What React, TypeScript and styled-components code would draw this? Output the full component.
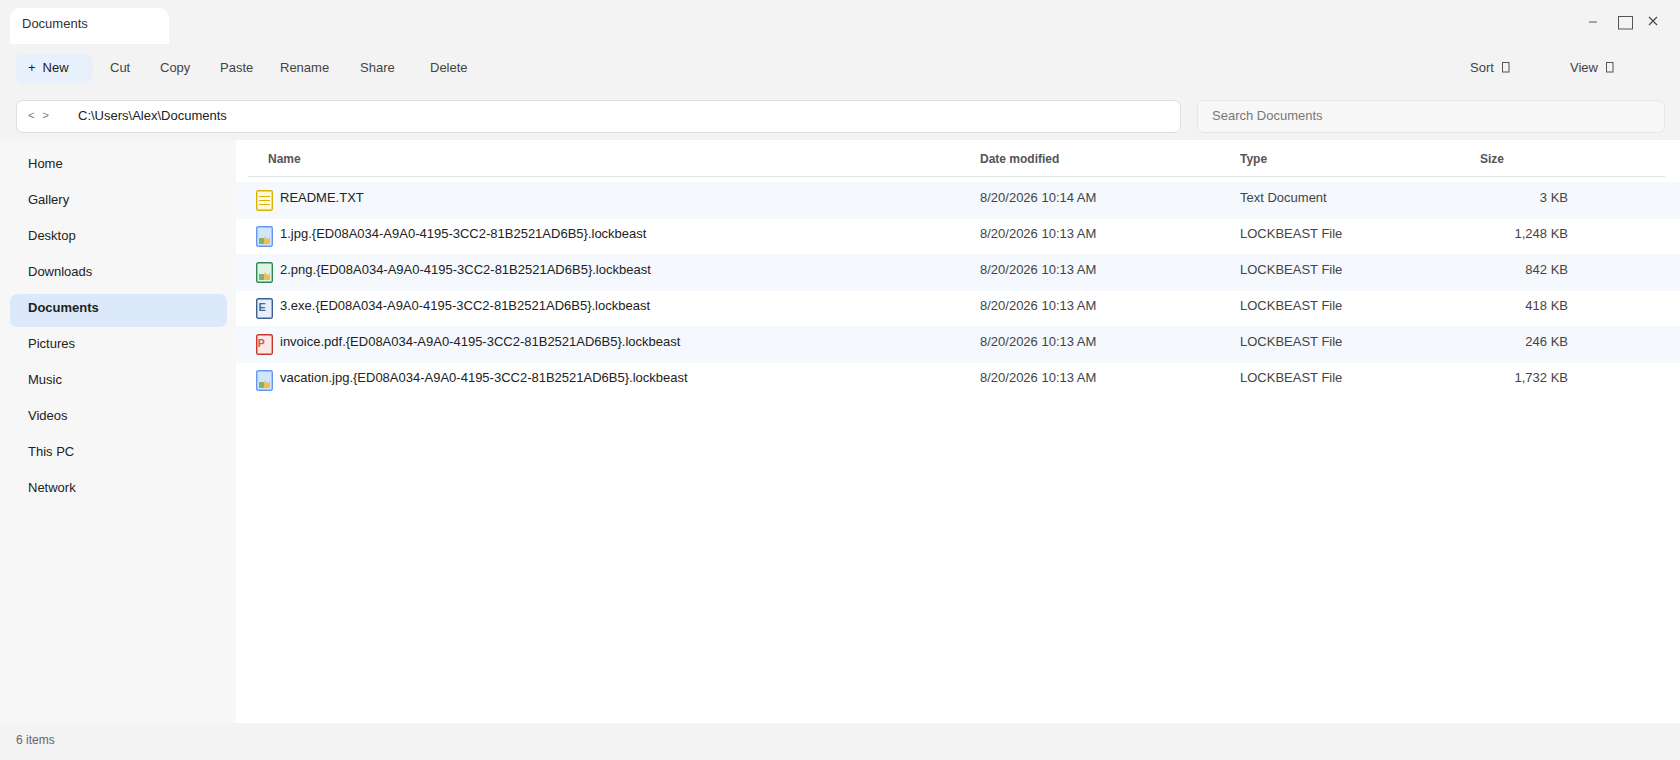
import React from "react";
import styled, { createGlobalStyle } from "styled-components";

const Global = createGlobalStyle`
  html, body { margin: 0; padding: 0; height: 100%; overflow: hidden; }
  body { font-family: "Liberation Sans", Arial, sans-serif; background: #f3f3f3; color: #222; }
`;

const Shell = styled.div`
  width: 1680px; height: 760px; display: flex; flex-direction: column; overflow: hidden; background: #f3f3f3;
`;
const TitleBar = styled.div`
  height: 54px; flex: none; display: flex; justify-content: space-between; align-items: flex-start; padding: 8px 0 0 10px; box-sizing: border-box;
`;
const Tab = styled.div`
  width: 159px; height: 36px; background: #fff; border-radius: 10px 10px 0 0; padding: 8px 12px 0; box-sizing: border-box; font-size: 13px; line-height: 15px; color: #333;
`;
const WindowControls = styled.div`
  display: flex; align-items: flex-start; margin-top: 8px; margin-right: 22px;
`;
const ControlIcon = styled.svg<{ $gap: number }>`
  display: block; flex: none; margin-left: ${(p) => p.$gap}px;
`;
const Toolbar = styled.div`
  height: 29px; flex: none; display: flex; align-items: stretch; padding: 0 10px 0 16px;
`;
const NewButton = styled.div`
  width: 77px; margin-right: 5px; background: #e8f0fb; border-radius: 8px; box-sizing: border-box; padding: 6px 0 0 12px; font-size: 13px; line-height: 15px; color: #222; display: flex; gap: 7px;
`;
const ToolButton = styled.div<{ $w: number }>`
  width: ${(p) => p.$w}px; padding: 6px 0 0 12px; box-sizing: border-box; font-size: 13px; line-height: 15px; color: #444;
`;
const MenuButton = styled.div<{ $w: number; $push?: boolean }>`
  width: ${(p) => p.$w}px; padding-top: 6px; box-sizing: border-box; font-size: 13px; line-height: 15px; color: #444; display: flex; gap: 8px;
  margin-left: ${(p) => (p.$push ? "auto" : "0")};
`;
const MissingGlyph = styled.svg`
  display: block; flex: none; margin-top: 2px;
`;
const AddressRow = styled.div`
  height: 33px; flex: none; margin-top: 17px; padding: 0 15px 0 16px; display: grid; grid-template-columns: 1165px 468px; gap: 16px;
`;
const AddressBar = styled.div`
  background: #fff; border: 1px solid #dedede; border-radius: 7px; box-sizing: border-box; display: flex; padding: 7px 0 0 11px; font-size: 13px; line-height: 15px; color: #222;
`;
const NavArrows = styled.div`
  width: 50px; flex: none; display: flex; gap: 8px; padding-top: 2px; font-size: 11px; line-height: 11px; color: #777;
`;
const SearchField = styled.div`
  background: #f7f7f7; border: 1px solid #e6e6e6; border-radius: 7px; box-sizing: border-box; padding: 7px 15px 0 14px; font-size: 13px; line-height: 15px; color: #777;
`;
const Body = styled.div`
  flex: 1; min-height: 0; margin-top: 7px; display: flex; background: #fff;
`;
const Sidebar = styled.nav`
  width: 236px; flex: none; background: #f7f7f7; padding: 10px 9px 0 10px; box-sizing: border-box; display: flex; flex-direction: column; gap: 3px;
`;
const NavItem = styled.div<{ $active?: boolean }>`
  height: 33px; box-sizing: border-box; padding: 6px 18px 0; font-size: 13px; line-height: 15px; border-radius: 7px;
  color: #222; font-weight: ${(p) => (p.$active ? 700 : 400)};
  background: ${(p) => (p.$active ? "#dce9fb" : "transparent")};
`;
const FilePane = styled.main`
  flex: 1; min-width: 0; display: flex; flex-direction: column;
`;
const HeaderRow = styled.div`
  height: 37px; flex: none; margin: 0 15px 5px 12px; padding: 12px 0 0 20px; box-sizing: border-box; border-bottom: 1px solid #e3e3e3;
  display: grid; grid-template-columns: 712px 260px 240px 88px; font-size: 12px; line-height: 14px; font-weight: 700; color: #555;
`;
const FileRow = styled.div<{ $alt: boolean }>`
  height: ${(p) => (p.$alt ? 37 : 35)}px; flex: none; box-sizing: border-box; padding: ${(p) => (p.$alt ? 8 : 7)}px 0 0 20px;
  display: grid; grid-template-columns: 724px 260px 240px 88px; font-size: 13px; line-height: 15px; color: #444;
  background: ${(p) => (p.$alt ? "#f5f8fd" : "#fff")};
`;
const NameCell = styled.div`
  display: flex; gap: 7px; color: #222; min-width: 0;
`;
const FileIconSvg = styled.svg`
  display: block; flex: none;
`;
const SizeCell = styled.div`
  text-align: right;
`;
const StatusBar = styled.footer`
  height: 37px; flex: none; padding: 10px 16px 0; box-sizing: border-box; font-size: 12px; line-height: 14px; color: #666;
`;

type Kind = "txt" | "img" | "png" | "exe" | "pdf";

const palette: Record<Kind, { fill: string; stroke: string }> = {
  txt: { fill: "#fff8dc", stroke: "#d9b300" },
  img: { fill: "#d2e5fc", stroke: "#6498f0" },
  png: { fill: "#dff4e6", stroke: "#2f8a4f" },
  exe: { fill: "#e8eef8", stroke: "#3c6090" },
  pdf: { fill: "#fde8e8", stroke: "#c9352b" },
};

function FileIcon({ kind }: { kind: Kind }) {
  const c = palette[kind];
  return (
    <FileIconSvg width="17" height="21" viewBox="0 0 17 21">
      <rect x="0.7" y="0.7" width="15.6" height="19.6" rx="1.6" fill={c.fill} stroke={c.stroke} strokeWidth="1.4" />
      {kind === "txt" && <path d="M3 6.5h11M3 10.5h11M3 14.5h11" fill="none" stroke="#d9b300" />}
      {(kind === "img" || kind === "png") && (
        <g>
          <rect x="3" y="12" width="5" height="6" fill="#7fb274" />
          <path d="M8 18V12.5L9.5 10L10.5 13L11.5 12L12.5 13.5L14 10.5V18Z" fill="#f0c04a" />
        </g>
      )}
      {kind === "exe" && (
        <text x="2.6" y="13" fontSize="11" fontWeight="700" fill="#4a6a9a" fontFamily="Liberation Sans, sans-serif">E</text>
      )}
      {kind === "pdf" && (
        <text x="1.8" y="13" fontSize="10.5" fontWeight="700" fill="#d8534a" fontFamily="Liberation Sans, sans-serif">P</text>
      )}
    </FileIconSvg>
  );
}

const suffix = ".{ED08A034-A9A0-4195-3CC2-81B2521AD6B5}.lockbeast";
const files: { name: string; date: string; type: string; size: string; kind: Kind }[] = [
  { name: "README.TXT", date: "8/20/2026 10:14 AM", type: "Text Document", size: "3 KB", kind: "txt" },
  { name: "1.jpg" + suffix, date: "8/20/2026 10:13 AM", type: "LOCKBEAST File", size: "1,248 KB", kind: "img" },
  { name: "2.png" + suffix, date: "8/20/2026 10:13 AM", type: "LOCKBEAST File", size: "842 KB", kind: "png" },
  { name: "3.exe" + suffix, date: "8/20/2026 10:13 AM", type: "LOCKBEAST File", size: "418 KB", kind: "exe" },
  { name: "invoice.pdf" + suffix, date: "8/20/2026 10:13 AM", type: "LOCKBEAST File", size: "246 KB", kind: "pdf" },
  { name: "vacation.jpg" + suffix, date: "8/20/2026 10:13 AM", type: "LOCKBEAST File", size: "1,732 KB", kind: "img" },
];

const nav = ["Home", "Gallery", "Desktop", "Downloads", "Documents", "Pictures", "Music", "Videos", "This PC", "Network"];
const tools: [string, number][] = [["Cut", 50], ["Copy", 60], ["Paste", 60], ["Rename", 80], ["Share", 70], ["Delete", 70]];

const Tofu = () => (
  <MissingGlyph width="8" height="11" viewBox="0 0 8 11">
    <rect x="0.5" y="0.5" width="6.5" height="9.5" fill="none" stroke="#555" />
  </MissingGlyph>
);

export default function App() {
  return (
    <Shell>
      <Global />
      <TitleBar>
        <Tab>Documents</Tab>
        <WindowControls>
          <ControlIcon $gap={0} width="10" height="16" viewBox="0 0 10 16">
            <path d="M1 6h8" stroke="#555" strokeWidth="1" fill="none" />
          </ControlIcon>
          <ControlIcon $gap={20} width="15" height="14" viewBox="0 0 15 14">
            <rect x="0.5" y="0.5" width="14" height="12.5" fill="none" stroke="#555" />
          </ControlIcon>
          <ControlIcon $gap={15} width="10" height="12" viewBox="0 0 10 12">
            <path d="M1 1l8 8M9 1l-8 8" stroke="#444" strokeWidth="1.1" fill="none" />
          </ControlIcon>
        </WindowControls>
      </TitleBar>
      <Toolbar>
        <NewButton><span>+</span><span>New</span></NewButton>
        {tools.map(([label, w]) => <ToolButton key={label} $w={w}>{label}</ToolButton>)}
        <MenuButton $w={100} $push>Sort<Tofu /></MenuButton>
        <MenuButton $w={100}>View<Tofu /></MenuButton>
      </Toolbar>
      <AddressRow>
        <AddressBar>
          <NavArrows><span>&lt;</span><span>&gt;</span></NavArrows>
          C:\Users\Alex\Documents
        </AddressBar>
        <SearchField>Search Documents</SearchField>
      </AddressRow>
      <Body>
        <Sidebar>
          {nav.map((n) => <NavItem key={n} $active={n === "Documents"}>{n}</NavItem>)}
        </Sidebar>
        <FilePane>
          <HeaderRow>
            <div>Name</div><div>Date modified</div><div>Type</div><div>Size</div>
          </HeaderRow>
          {files.map((f, i) => (
            <FileRow key={f.name} $alt={i % 2 === 0}>
              <NameCell><FileIcon kind={f.kind} /><span>{f.name}</span></NameCell>
              <div>{f.date}</div>
              <div>{f.type}</div>
              <SizeCell>{f.size}</SizeCell>
            </FileRow>
          ))}
        </FilePane>
      </Body>
      <StatusBar>6 items</StatusBar>
    </Shell>
  );
}
